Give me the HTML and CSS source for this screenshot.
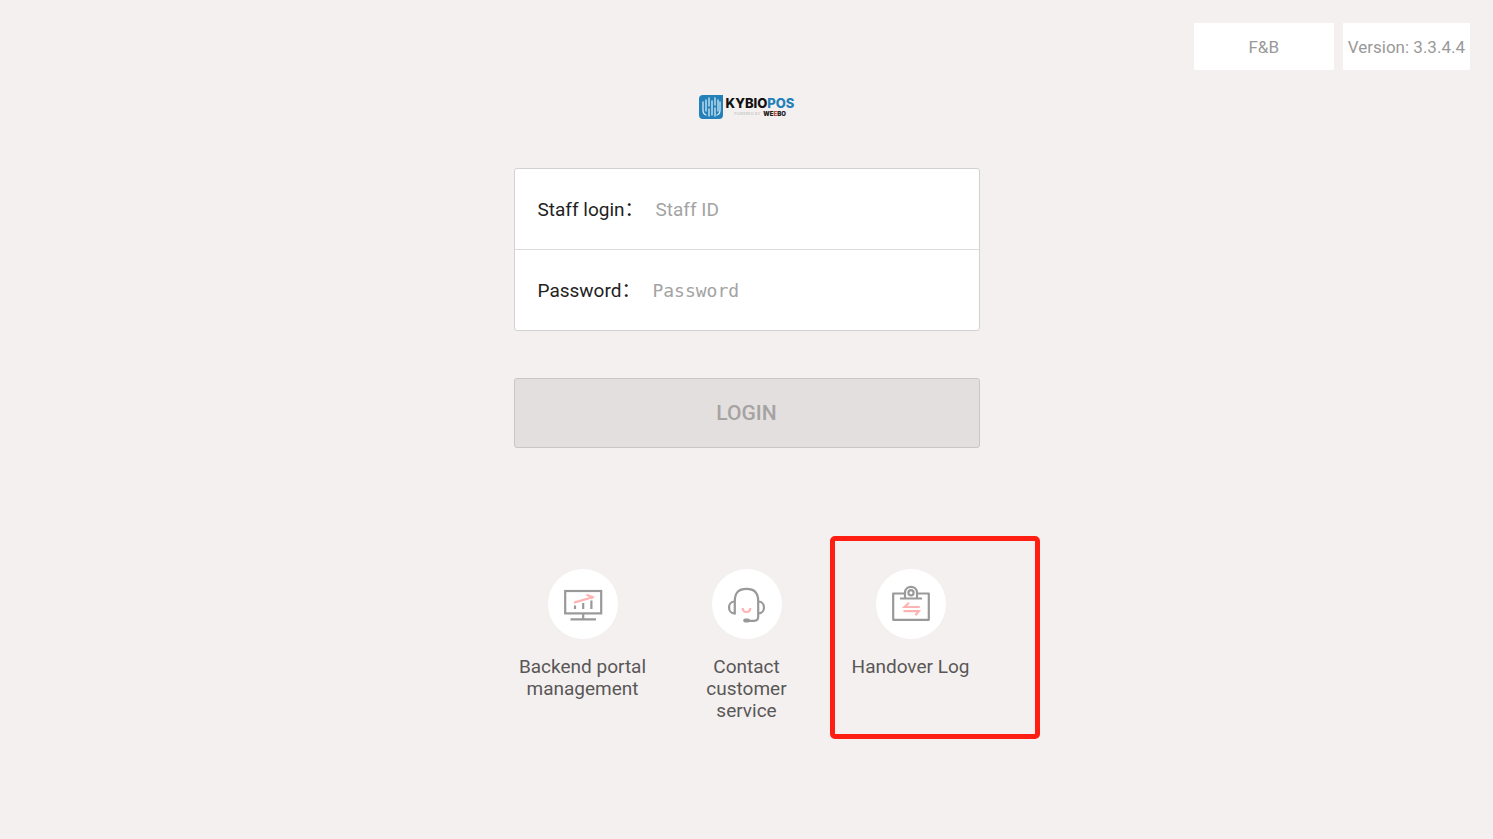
FILE: index.html
```html
<!DOCTYPE html>
<html lang="en">
<head>
<meta charset="utf-8">
<title>KYBIOPOS Login</title>
<link rel="stylesheet" href="styles.css">
</head>
<body>
<header class="topbar">
  <button class="tag tag-mode" type="button">F&amp;B</button>
  <span class="tag">Version: 3.3.4.4</span>
</header>
<main class="login">
  <div class="brand">
    <svg class="brand-mark" viewBox="0 0 24 24" aria-hidden="true">
      <path d="M4 0H24V20Q24 24 20 24H4Q0 24 0 20V4Q0 0 4 0Z" fill="#2480b8"/>
      <path d="M4 7V15Q4 19 7 20M7 5V16M10 3V11M10 14V21M13 6V20M16 3V10M16 13V21M19 5V16M21 7V15Q21 19 18 20" fill="none" stroke="#d3e8f4" stroke-width="1.3" stroke-linecap="round"/>
    </svg>
    <div class="brand-text">
      <div class="brand-name">KYBIO<span class="brand-pos">POS</span></div>
      <div class="brand-sub"><span>POWERED BY</span><b>WE<i>E</i>BO</b></div>
    </div>
  </div>
  <form class="form">
    <div class="fields">
      <div class="field">
        <label for="staff">Staff login：</label>
        <input id="staff" type="text" placeholder="Staff ID">
      </div>
      <div class="field">
        <label for="password">Password：</label>
        <input id="password" class="mono" type="password" placeholder="Password">
      </div>
    </div>
    <button class="submit" type="submit" disabled>LOGIN</button>
  </form>
  <nav class="links">
    <a class="link" href="#backend">
      <span class="circle">
        <svg viewBox="0 0 70 70" fill="none" stroke="#999" stroke-width="2.2" aria-hidden="true">
          <rect x="17.2" y="22" width="36" height="22.4"/>
          <path d="M35.2 44V50M22.5 50.4H48"/>
          <path d="M27 36.5V40M35.2 34V40M43.4 31.5V40"/>
          <path d="M26 33.6L44.5 28.2M38.5 25.7L44.8 28.2L43 29.7" stroke="#ffb3b3"/>
        </svg>
      </span>
      <span>Backend portal management</span>
    </a>
    <a class="link" href="#contact">
      <span class="circle">
        <svg viewBox="0 0 70 70" fill="none" stroke="#999" stroke-width="2.2" stroke-linejoin="round" aria-hidden="true">
          <path d="M22.8 45.5V32Q22.8 19.8 34.5 19.8Q46.2 19.8 46.2 32V47.5Q46.2 51.8 42.1 51.8H36"/>
          <path d="M22.8 32.5C15.1 32.5 15.1 44.5 22.8 44.5M46.2 32.5C53.9 32.5 53.9 44.5 46.2 44.5"/>
          <path d="M33.2 51.4H36" stroke-width="4" stroke-linecap="round"/>
          <path d="M30.7 39C30.7 44.3 38.3 44.3 38.3 39" stroke="#ffb3b3"/>
        </svg>
      </span>
      <span>Contact customer service</span>
    </a>
    <a class="link link-marked" href="#handover">
      <span class="circle">
        <svg viewBox="0 0 70 70" fill="none" stroke="#999" stroke-width="2.2" stroke-linejoin="round" aria-hidden="true">
          <path d="M29 24.5H17.2V50.8H52.8V24.5H41"/>
          <path d="M24 29.5H46M29 29V23.5C29 16 41 16 41 23.5V29"/>
          <circle cx="35" cy="23.8" r="2.6"/>
          <path d="M43.8 38H28.5L33 33.8M27.5 42.2H42.8L39.5 46.2" stroke="#ffb3b3" stroke-linejoin="miter"/>
        </svg>
      </span>
      <span>Handover Log</span>
    </a>
  </nav>
</main>
</body>
</html>
```
FILE: styles.css
```css
*, *::after { box-sizing: border-box; }
body {
  margin: 0;
  min-height: 100vh;
  background: #f4f0ef;
  color: #222;
  font-family: Roboto, "Noto Sans CJK SC", sans-serif;
  font-size: 19px;
  line-height: 22px;
}
button, input { font: inherit; }
.topbar {
  display: flex;
  justify-content: flex-end;
  gap: 9px;
  padding: 23px 23px 0;
}
.tag {
  display: flex;
  align-items: center;
  justify-content: center;
  height: 47px;
  padding: 0 5px;
  border: 0;
  background: #fff;
  color: #999;
  font-size: 17px;
}
.tag-mode { width: 140px; }
.login {
  display: flex;
  flex-direction: column;
  align-items: center;
  padding: 25px 0 24px;
}
.brand {
  display: flex;
  align-items: center;
  gap: 3px;
  height: 24px;
}
.brand-mark { width: 24px; height: 24px; }
.brand-text { display: flex; flex-direction: column; }
.brand-name {
  font: 800 13px/14px Inter, sans-serif;
  color: #111;
}
.brand-pos { color: #2480b8; }
.brand-sub {
  display: flex;
  align-items: center;
  justify-content: center;
  gap: 3px;
  font: 4px/8px Inter, sans-serif;
  color: #bbb;
}
.brand-sub b { font-size: 6px; font-weight: 900; color: #222; }
.brand-sub i { font-style: normal; color: #b5513a; }
.form {
  width: 466px;
  max-width: 94%;
  margin-top: 49px;
}
.fields {
  border: 1px solid #d3d1d1;
  border-radius: 3px;
  background: #fff;
}
.field {
  display: flex;
  align-items: center;
  gap: 12px;
  height: 80px;
  padding: 2px 23px 0;
}
.field + .field { height: 81px; border-top: 1px solid #ddd; }
.field input {
  flex: 1;
  min-width: 0;
  padding: 0;
  border: 0;
  outline: 0;
  background: none;
}
.field input::placeholder { color: #a3a3a3; opacity: 1; }
.field .mono { font-family: "DejaVu Sans Mono", monospace; font-size: 18px; }
.submit {
  display: block;
  width: 100%;
  height: 70px;
  margin-top: 47px;
  border: 1px solid #c8c6c6;
  border-radius: 3px;
  background: #e3dfde;
  color: #a5a3a2;
  font-size: 21px;
  font-weight: 500;
}
.links {
  display: flex;
  align-items: flex-start;
  gap: 24px;
  margin-top: 121px;
}
.link {
  position: relative;
  display: flex;
  flex-direction: column;
  align-items: center;
  gap: 17px;
  width: 140px;
  color: #595757;
  text-align: center;
  text-decoration: none;
}
.circle {
  width: 70px;
  height: 70px;
  border-radius: 50%;
  background: #fff;
}
.circle svg { display: block; width: 100%; height: 100%; }
.link-marked::after {
  content: "";
  position: absolute;
  top: -33px;
  left: -11px;
  width: 210px;
  height: 203px;
  border: 5px solid #ff1e12;
  border-radius: 5px;
}
```
